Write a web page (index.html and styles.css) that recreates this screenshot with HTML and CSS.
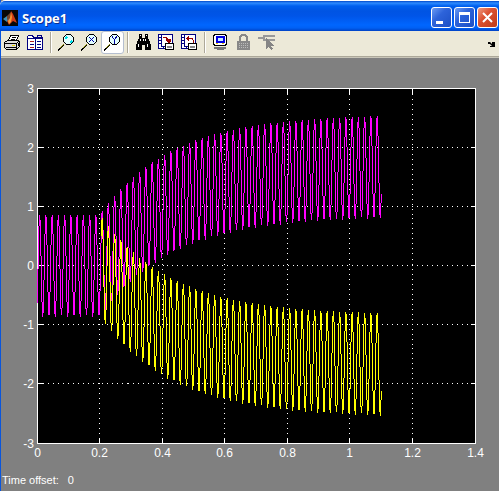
FILE: index.html
```html
<!DOCTYPE html>
<html lang="en">
<head>
<meta charset="utf-8">
<title>Scope1</title>
<link rel="stylesheet" href="styles.css">
</head>
<body>
<main class="window">
  <header class="titlebar">
    <svg class="logo" width="16" height="16" viewBox="0 0 16 16" aria-hidden="true">
      <rect width="16" height="16" fill="#080808"/>
      <path d="M1 9l4-3 3 2-3 4z" fill="#3f8fb5"/>
      <path d="M5 6l4-4-1 6-3 2z" fill="#75452b"/>
      <path d="M9 1l2 3 4 9-4-2-4 4-2-4 3-3z" fill="#cc3b18"/>
      <path d="M9 2l1 5-1 5-2 2-1-3 2-3z" fill="#f49a35"/>
    </svg>
    <h1 class="title">Scope1</h1>
    <div class="controls">
      <button class="control" aria-label="Minimize"><svg width="19" height="19" viewBox="0 0 19 19"><path d="M4 13h7v3H4z" fill="#fff"/></svg></button>
      <button class="control" aria-label="Maximize"><svg width="19" height="19" viewBox="0 0 19 19"><path d="M4 4h11v11H4zM5 7v7h9V7z" fill="#fff" fill-rule="evenodd"/></svg></button>
      <button class="control close" aria-label="Close"><svg width="19" height="19" viewBox="0 0 19 19"><path d="M5 5l9 9M14 5l-9 9" stroke="#fff" stroke-width="2"/></svg></button>
    </div>
  </header>
  <nav class="toolbar" aria-label="Scope tools">
    <button class="tool" aria-label="Print"><svg class="icon" viewBox="0 0 17 17"><path d="M4.500 6.500l2-5h8l-2 5z" fill="#fff" stroke="#000"/><path d="M8 3.500h4M7 5.500h4" stroke="#000"/><path d="M.5 8.500l3-2h11l1 2v4l-3 3h-10l-2-2z" fill="#ddd" stroke="#000"/><path d="M1 9.500h11l3-2M12.500 9.500v5M2 13.500h10M14.500 9v3" stroke="#000" fill="none"/><path d="M8 11.500h3" stroke="#e8d800"/></svg></button>
    <button class="tool" aria-label="Parameters"><svg class="icon" viewBox="0 0 17 17"><path d="M.5 15.500v-13l1-1h4l1 2h9v12z" fill="#fff" stroke="#000080"/><path d="M1 4.500h14M8.500 4v11M10.500 3V1.500h4V3" fill="none" stroke="#000080"/><path d="M3 10.500h4M10 7.500h4M10 10.500h4M10 13h4" stroke="#000080"/><path d="M3 7.500h4M3 13.500h4" stroke="#b02020"/></svg></button>
    <span class="divider"></span>
    <button class="tool" aria-label="Zoom"><svg class="icon" viewBox="0 0 17 17"><path d="M0 16.500l6-6" stroke="#000" stroke-width="2"/><path d="M1.500 14.500l4-4" stroke="#808000"/><path d="M8.500.5h4l3 3v4l-3 3h-4l-3-3v-4z" fill="#e4ffff" stroke="#000"/><path d="M7 5l2-2M12 9l2-2" stroke="#00dfe8" stroke-width="2"/></svg></button>
    <button class="tool" aria-label="Zoom X-axis"><svg class="icon" viewBox="0 0 17 17"><path d="M0 16.500l6-6" stroke="#000" stroke-width="2"/><path d="M1.500 14.500l4-4" stroke="#808000"/><path d="M8.500.5h4l3 3v4l-3 3h-4l-3-3v-4z" fill="#e4ffff" stroke="#000"/><path d="M8 3l5 5M13 3L8 8" stroke="#0000a0"/></svg></button>
    <button class="tool pressed" aria-label="Zoom Y-axis" aria-pressed="true"><svg class="icon" viewBox="0 0 17 17"><path d="M0 16.500l6-6" stroke="#000" stroke-width="2"/><path d="M1.500 14.500l4-4" stroke="#808000"/><path d="M8.500.5h4l3 3v4l-3 3h-4l-3-3v-4z" fill="#e4ffff" stroke="#000"/><path d="M8 2.500l2.500 3v4M13 2.500l-2.500 3" fill="none" stroke="#0000a0"/></svg></button>
    <span class="divider"></span>
    <button class="tool" aria-label="Autoscale"><svg class="icon" viewBox="0 0 17 17"><path d="M4 0h3v4h3V0h3v4l1 2 2 5v5h-6v-5H7v5H1v-5l2-5 1-2z" fill="#000"/><path d="M5 1h1v1H5zM11 1h1v1h-1zM5 5h1v2H5zM10 5h1v2h-1zM3 10h1v3H3zM12 10h1v3h-1zM8 5h1v2H8z" fill="#fff"/></svg></button>
    <button class="tool" aria-label="Save axes settings"><svg class="icon" viewBox="0 0 17 17"><path d="M.5.5h14v14H.5z" fill="#fff" stroke="#000080"/><path d="M3.500 1v11.500H14M1 3.500h2M1 6.500h2M1 9.500h2M5.500 12v2" fill="none" stroke="#000080"/><path d="M5 3.500h3l2.500 2v2" fill="none" stroke="#900"/><path d="M8 5h5v3h-1v1h-2V8H9V7H8z" fill="#900"/><path d="M7.500 9.500h8v6h-8z" fill="#fff" stroke="#000"/><path d="M9 12h5v2H9z" fill="#888"/></svg></button>
    <button class="tool" aria-label="Restore axes settings"><svg class="icon" viewBox="0 0 17 17"><path d="M.5.5h14v14H.5z" fill="#fff" stroke="#000080"/><path d="M3.500 1v11.500H14M1 3.500h2M1 6.500h2M1 9.500h2M5.500 12v2" fill="none" stroke="#000080"/><path d="M7 4.500h4l1.500 2V9" fill="none" stroke="#900"/><path d="M5 4.500l3-3v6z" fill="#900"/><path d="M7.500 9.500h8v6h-8z" fill="#fff" stroke="#000"/><path d="M9 12h5v2H9z" fill="#888"/></svg></button>
    <span class="divider"></span>
    <button class="tool" aria-label="Floating scope"><svg class="icon" viewBox="0 0 17 17"><path d="M3.500.5h9l2 1v9l-2 1h-9l-2-1v-9z" fill="#fff" stroke="#000"/><path d="M4.500 2.500h7v5h-7z" fill="#c8eeff" stroke="#0000e0" stroke-width="2"/><path d="M4 9.500h2M10 9.500h2" stroke="#e0c000"/><path d="M2 13h12v2H2zM5 15h7v1H5z" fill="#777"/></svg></button>
    <button class="tool" aria-label="Lock axes" disabled><svg class="icon" viewBox="0 0 17 17"><path d="M5 8V3l2-2h3l2 2v5" fill="none" stroke="#888" stroke-width="2"/><path d="M2 7h13v9H2z" fill="#888"/><path d="M4 9.500h9M4 11.500h9M4 13.500h9" stroke="#bbb" stroke-dasharray="1 1"/></svg></button>
    <button class="tool" aria-label="Signal selection" disabled><svg class="icon" viewBox="0 0 17 17"><path d="M0 4h6M5 2h12M5 6h12M6 1v6" stroke="#999" stroke-width="2"/><path d="M8 4v11l3-2 2 3 2-1-2-3h3z" fill="#858585"/></svg></button>
    <button class="overflow" aria-label="Dock"><svg width="7" height="6" viewBox="0 0 7 6"><path d="M0 1h2l2 2V1h3v5H2V5h2L2 3H0z" fill="#000"/></svg></button>
  </nav>
  <section class="scope">
    <svg class="chart" id="chart" viewBox="0 0 498 410" role="img" aria-label="Scope signals over time"></svg>
    <p class="status"><span>Time offset:</span><span>0</span></p>
  </section>
</main>
<script src="chart.js"></script>
</body>
</html>
```
FILE: styles.css
```css
* { box-sizing: border-box; }
body {
  margin: 0;
  background: #808080;
  font: 11px/13px "Liberation Sans", Arial, sans-serif;
}
.window {
  min-height: 100vh;
  display: flex;
  flex-direction: column;
  border-left: 1px solid #0855dd;
  background: #808080;
}
.titlebar {
  height: 31px;
  display: flex;
  align-items: center;
  gap: 4px;
  padding: 3px 1px 0 2px;
  margin-left: -1px;
  border-top: 1px solid #fff;
  border-radius: 5px 0 0 0;
  background: linear-gradient(#0048c8 0, #2f8cff 2px, #0060ee 5px, #0054e3 10px, #0055e8 15px, #0066ff 24px, #0060f4 27px, #0042c5 30px);
}
.title {
  flex: 1;
  margin: 0;
  color: #fff;
  font: bold 13px/18px "Open Sans", "Trebuchet MS", sans-serif;
  text-shadow: 1px 1px #0a2f91;
}
.controls { display: flex; gap: 2px; }
button { padding: 0; border: 0; background: none; }
.control {
  width: 21px;
  height: 21px;
  border: 1px solid #fff;
  border-radius: 3px;
  background: linear-gradient(135deg, #6c9cf4, #2d63da 40%, #1c4fc5);
}
.control.close { background: linear-gradient(135deg, #ee9a80, #dc5131 40%, #bf3a17); }
.control svg { display: block; }
.toolbar {
  height: 26px;
  display: flex;
  align-items: center;
  padding-bottom: 2px;
  margin-bottom: 1px;
  background: #ece9d8;
  border-bottom: 1px solid #aca899;
  box-shadow: 0 1px #c8c5b8;
}
.tool {
  width: 23px;
  height: 23px;
  display: grid;
  place-items: center;
  border: 1px solid transparent;
  border-radius: 3px;
}
.tool.pressed { background: #fff; border-color: #b5bfd0; }
.icon { width: 17px; height: 17px; shape-rendering: crispEdges; }
.divider {
  width: 2px;
  height: 21px;
  margin: 0 3px;
  border-left: 1px solid #aca899;
  border-right: 1px solid #fff;
}
.overflow { margin-left: auto; padding-right: 4px; }
.scope { flex: 1; display: flex; flex-direction: column; }
.chart { display: block; width: 100%; shape-rendering: crispEdges; }
.chart-bg { fill: #000; stroke: #fff; }
.grid { stroke: #fff; stroke-dasharray: 1 4; }
.tick { stroke: #fff; }
.label { fill: #fff; font-size: 12px; }
.trace { fill: none; stroke-width: 1; }
.magenta { stroke: #f0f; }
.yellow { stroke: #ff0; }
.status {
  display: flex;
  gap: 9px;
  margin: 6px 0 0 1px;
  color: #fff;
}
```
FILE: chart.js
```javascript
const svg = document.getElementById("chart");
const plot = { left: 36.5, right: 474.5, top: 30.5, bottom: 385.5 };
const px = t => plot.left + t / 1.4 * (plot.right - plot.left);
const py = v => plot.top + (3 - v) / 6 * (plot.bottom - plot.top);
const snap = n => Math.floor(n - 0.4) + 0.5;

function add(name, attributes, text) {
  const node = document.createElementNS("http://www.w3.org/2000/svg", name);
  for (const [key, value] of Object.entries(attributes)) node.setAttribute(key, value);
  if (text !== undefined) node.textContent = text;
  svg.append(node);
}
function line(kind, x1, y1, x2, y2) {
  add("line", { class: kind, x1, y1, x2, y2 });
}

add("rect", { class: "chart-bg", x: plot.left, y: plot.top, width: 438, height: 355 });
for (let i = 0; i <= 7; i++) {
  const x = snap(px(i * 0.2));
  if (i > 0 && i < 7) {
    line("grid", x, plot.top, x, plot.bottom);
    line("tick", x, plot.top, x, plot.top + 5);
    line("tick", x, plot.bottom - 5, x, plot.bottom);
  }
  add("text", { class: "label", x, y: 399, "text-anchor": "middle" }, String(i * 2 / 10));
}
for (let v = -3; v <= 3; v++) {
  const y = snap(py(v));
  if (Math.abs(v) < 3) {
    line("grid", plot.left, y, plot.right, y);
    line("tick", plot.left, y, plot.left + 5, y);
    line("tick", plot.right - 5, y, plot.right, y);
  }
  add("text", { class: "label", x: 33, y: y + 4, "text-anchor": "end" }, String(v));
}

function trace(kind, start, sign) {
  const points = [];
  for (let i = Math.round(start / 0.0016); i * 0.0016 <= 1.101; i++) {
    const t = i * 0.0016;
    const center = t > 0.2 ? 1.7 * (1 - Math.exp(-(t - 0.2) / 0.23)) : 0;
    const value = sign * center + 0.86 * Math.sin(2 * Math.PI * (t - 0.0026) / 0.02);
    points.push(snap(px(t)) + "," + snap(py(value)));
  }
  add("polyline", { class: "trace " + kind, points: points.join(" ") });
}
trace("magenta", 0, 1);
trace("yellow", 0.205, -1);
```
